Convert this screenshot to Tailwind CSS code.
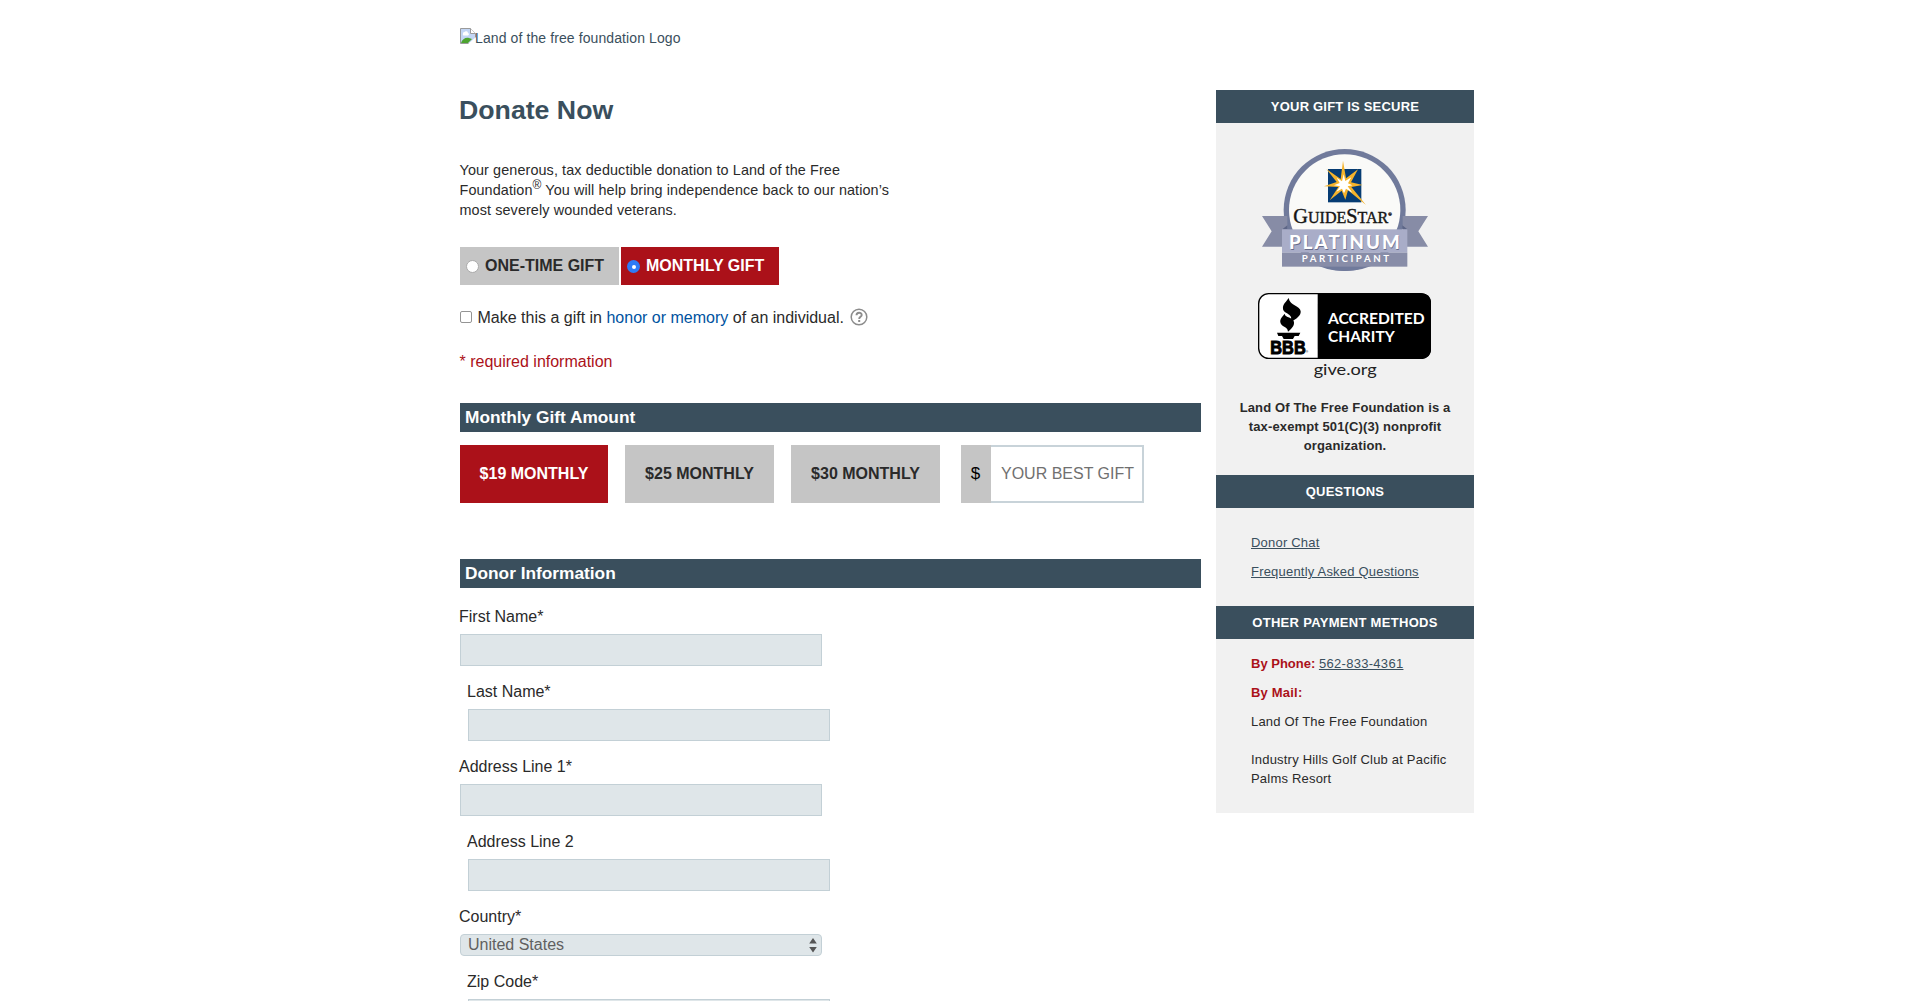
<!DOCTYPE html>
<html lang="en">
<head>
<meta charset="utf-8">
<title>Donate Now</title>
<script src="https://cdn.jsdelivr.net/npm/@tailwindcss/browser@4"></script>
</head>
<body class="h-[1001px] overflow-hidden bg-white font-['Liberation_Sans',Arial,sans-serif] text-base text-[#2a2a2a]">
<div class="ml-[460px] flex w-[1014px] flex-col">
  <header class="flex h-[62px] shrink-0 mt-7 text-[#3a4f5d]">
    <svg class="size-4" viewBox="0 0 16 16"><path d="M.5.5h10l5 5v10H.5z" fill="#c3d6f5" stroke="#9a9a9a"/><path d="M3 6a1.6 1.6 0 0 1 1.500-2 2 2 0 0 1 3.500 1 1.300 1.300 0 0 1 0 2.500H3.500A1 1 0 0 1 3 6z" fill="#fff"/><path d="M1 15c1-4 5-6 8-5l3 1-4 4z" fill="#4da32f"/><path d="M10.500.5v5h5" fill="#fff" stroke="#9a9a9a"/><path d="M8 16l8-7v7z" fill="#fff"/></svg>
    <span class="-ml-px text-[14px] leading-5 tracking-[0.1px]">Land of the free foundation Logo</span>
  </header>
  <div class="flex items-start gap-[15px]">
    <main class="flex w-[741px] flex-col">
      <h1 class="-ml-px h-10 text-[26.700px] leading-10 font-bold text-[#3a4f5d]">Donate Now</h1>
      <p class="mt-[30px] ml-[-0.500px] h-[60px] text-[14.400px] leading-5 tracking-[0.100px]">Your generous, tax deductible donation to Land of the Free<br>Foundation<sup class="text-[12px] leading-none">®</sup> You will help bring independence back to our nation’s<br>most severely wounded veterans.</p>
      <div class="mt-[27px] flex h-[38px] gap-0.5 font-bold">
        <label class="flex w-[159px] gap-[6px] bg-[#c5c5c5] pl-[6px] leading-[37px]"><span class="mt-[13px] size-[13px] rounded-full border border-[#aaa] bg-white"></span>ONE-TIME GIFT</label>
        <label class="flex w-[158px] gap-[6px] bg-[#ab1119] pl-[6px] leading-[37px] text-white"><span class="mt-[13px] flex size-[13px] items-center justify-center rounded-full bg-[#2f7bf6]"><span class="size-[4px] rounded-full bg-white"></span></span>MONTHLY GIFT</label>
      </div>
      <div class="mt-5 flex h-6 items-center leading-6">
        <span class="mr-[5.500px] size-3 rounded-[2px] border border-[#949494] bg-white"></span>
        <span class="pt-px">Make this a gift in <a class="text-[#00539f]">honor or memory</a> of an individual.</span>
        <svg class="ml-1.5 size-[18px]" viewBox="0 0 18 18" fill="none" stroke="#8c8c8c"><circle cx="9" cy="9" r="7.800" stroke-width="1.500"/><path d="M6.500 7.300c0-3.400 5.200-3.200 5.200-.3 0 1.800-2.500 1.900-2.500 3.900" stroke-width="1.900"/><path d="M9.200 12v2" stroke-width="2"/></svg>
      </div>
      <p class="mt-[21px] ml-[-0.500px] h-6 leading-6 text-[#ab1119]">* required information</p>
      <h2 class="mt-[29px] h-[29px] bg-[#3a4f5d] pl-[5px] text-[17.300px] leading-[29px] font-bold text-white">Monthly Gift Amount</h2>
      <div class="mt-[13px] flex h-[58px] text-center leading-[57px]">
        <div class="mr-[17px] w-[148px] bg-[#ab1119] font-bold text-white">$19 MONTHLY</div>
        <div class="mr-[17px] w-[149px] bg-[#c5c5c5] font-bold">$25 MONTHLY</div>
        <div class="mr-[21px] w-[149px] bg-[#c5c5c5] font-bold">$30 MONTHLY</div>
        <div class="w-[30px] bg-[#c5c5c5] pr-px text-[17px] text-black">$</div>
        <div class="w-[153px] border-2 border-l-0 border-[#c8d3d9] pl-0.5 leading-[53px] text-[#707070]">YOUR BEST GIFT</div>
      </div>
      <h2 class="mt-14 h-[29px] bg-[#3a4f5d] pl-[5px] text-[17.300px] leading-[29px] font-bold text-white">Donor Information</h2>
      <form class="mt-[17px] flex flex-col">
        <div class="h-[75px]"><label class="-ml-px block h-[29px] leading-6">First Name*</label><div class="h-8 w-[362px] border border-[#c3d0d6] bg-[#dfe6e9]"></div></div>
        <div class="h-[75px] pl-2"><label class="-ml-px block h-[29px] leading-6">Last Name*</label><div class="h-8 w-[362px] border border-[#c3d0d6] bg-[#dfe6e9]"></div></div>
        <div class="h-[75px]"><label class="-ml-px block h-[29px] leading-6">Address Line 1*</label><div class="h-8 w-[362px] border border-[#c3d0d6] bg-[#dfe6e9]"></div></div>
        <div class="h-[75px] pl-2"><label class="-ml-px block h-[29px] leading-6">Address Line 2</label><div class="h-8 w-[362px] border border-[#c3d0d6] bg-[#dfe6e9]"></div></div>
        <div class="h-[65px]"><label class="-ml-px block h-[29px] leading-6">Country*</label>
          <div class="flex h-[22px] w-[362px] items-center justify-between rounded-[4px] border border-[#c3d0d6] bg-[#dfe6e9] pr-1 pl-[7px] leading-5 text-[#606060]"><span>United States</span><svg class="h-4 w-2" viewBox="0 0 8 16" fill="#555"><path d="M4 1l3.800 5.500H.2zM4 15.500L.2 10h7.600z"/></svg></div></div>
        <div class="h-[75px] pl-2"><label class="-ml-px block h-[29px] leading-6">Zip Code*</label><div class="h-8 w-[362px] border border-[#c3d0d6] bg-[#dfe6e9]"></div></div>
      </form>
    </main>
    <aside class="flex h-[723px] w-[258px] flex-col bg-[#f1f1f1] text-[13px] leading-[19px] tracking-[0.200px]">
      <h3 class="h-[33px] bg-[#3a4f5d] text-center leading-[33px] font-bold text-white">YOUR GIFT IS SECURE</h3>
      <svg class="mt-[26px] ml-[46px] h-[122px] w-[166px] tracking-normal" viewBox="186 207 498 366">
        <circle cx="434" cy="390" r="183" fill="#707a9b"/><circle cx="434" cy="390" r="167" fill="#fafaf8"/>
        <path d="M186 408h76v92h-76l29-46zM684 408h-76v92h76l-29-46z" fill="#878ca6"/>
        <path d="M247 448l15-12v12zM622 448l-15-12v12z" fill="#5d6687"/>
        <path d="M330 545h210q-50 28-106 28t-104-28z" fill="#707a9b"/>
        <rect x="384" y="267" width="100" height="100" fill="#063c73"/>
        <path d="M429 242l9 53 36-27-21 39 35 8-34 6 44 54-54-44-8 28-11-27-36 29 26-40-43-2 38-13-31-39 43 30z" fill="#f4b32b"/>
        <path d="M431 283l5 20 18-11-10 18 13 6-14 3 14 19-19-12-6 14-6-14-17 9 11-16-18-3 17-7-9-16 16 11z" fill="#fff"/>
        <text x="280" y="429" font-family="Liberation Serif, serif" fill="#151515" stroke="#151515" stroke-width="1.200" font-size="61">G<tspan font-size="48">UIDE</tspan>S<tspan font-size="48">TAR</tspan><tspan font-size="14" dy="-22">®</tspan></text>
        <rect x="246" y="448" width="376" height="70" fill="#a9adc8"/><rect x="246" y="518" width="376" height="42" fill="#888da8"/>
        <g font-family="Lato, sans-serif" font-weight="900"><text x="269" y="510" font-size="56" textLength="332" fill="#666c8a">PLATINUM</text><text x="267" y="507" font-size="56" textLength="332" fill="#fff">PLATINUM</text><text x="305" y="547" font-size="29" font-weight="700" textLength="262" fill="#fff">PARTICIPANT</text></g>
      </svg>
      <svg class="mt-[22px] ml-[42px] h-[86px] w-[173px] tracking-normal" viewBox="174 69 519 258">
        <rect x="176" y="71" width="516" height="194" rx="30" fill="#fff" stroke="#000" stroke-width="4"/>
        <path d="M353 70h310q30 0 30 30v136q0 30-30 30H353z"/>
        <path d="M266 84c-9 14-18 18-17 32 1 17 35 13 22 40 21-10 32-20 31-32-1-18-32-15-36-40zM254 131c-6 8-15 15-13 26 2 15 22 12 23 28 15-11 22-23 16-34-7-11-24-7-26-20zM231 188h70l-5 10h-12l-5 9h-28l-5-9h-11z"/>
        <text x="211" y="251" font-family="Liberation Sans, sans-serif" font-weight="700" font-size="53" textLength="106" lengthAdjust="spacingAndGlyphs" stroke="#000" stroke-width="3">BBB</text><text x="317" y="250" font-size="10" font-family="Liberation Sans, sans-serif">®</text>
        <g font-family="Lato, sans-serif" font-weight="700" font-size="43" fill="#fff"><text x="384" y="162" textLength="290" lengthAdjust="spacingAndGlyphs">ACCREDITED</text><text x="384" y="215" textLength="200" lengthAdjust="spacingAndGlyphs">CHARITY</text></g>
        <text x="341" y="314" font-family="Lato, sans-serif" font-size="43" fill="#222" textLength="189" lengthAdjust="spacingAndGlyphs">give.org</text>
      </svg>
      <p class="mt-[19px] h-[77px] text-center font-bold tracking-[0.130px]">Land Of The Free Foundation is a<br>tax-exempt 501(C)(3) nonprofit<br>organization.</p>
      <h3 class="h-[33px] bg-[#3a4f5d] text-center leading-[33px] font-bold text-white">QUESTIONS</h3>
      <div class="flex h-[98px] flex-col gap-2.5 pt-[25px] pl-[35px] text-[#3a4f5d] underline"><a>Donor Chat</a><a>Frequently Asked Questions</a></div>
      <h3 class="h-[33px] bg-[#3a4f5d] text-center leading-[33px] font-bold tracking-[0.300px] text-white">OTHER PAYMENT METHODS</h3>
      <div class="flex flex-col gap-2.5 pt-[15px] pl-[35px]">
        <p><b class="tracking-normal text-[#ab1119]">By Phone: </b><a class="tracking-[0.300px] text-[#3a4f5d] underline">562-833-4361</a></p>
        <p><b class="text-[#ab1119]">By Mail:</b></p>
        <p>Land Of The Free Foundation<br><br>Industry Hills Golf Club at Pacific<br>Palms Resort</p>
      </div>
    </aside>
  </div>
</div>
</body>
</html>
